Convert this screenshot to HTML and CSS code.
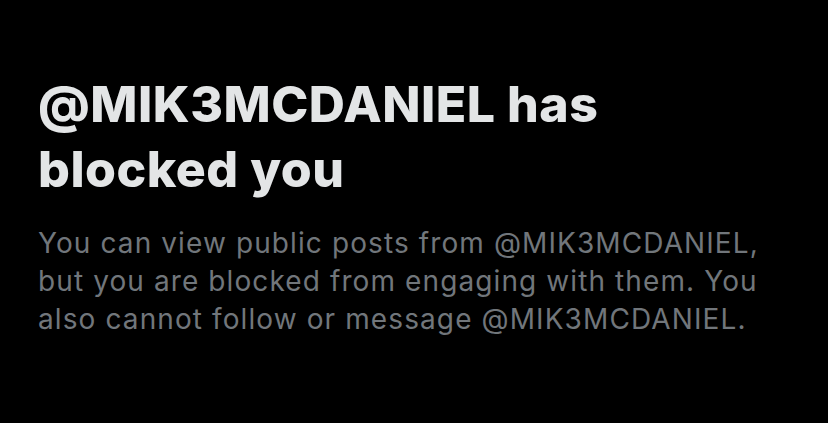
FILE: index.html
```html
<!DOCTYPE html>
<html lang="en">
<head>
    <meta charset="UTF-8">
    <meta name="viewport" content="width=device-width, initial-scale=1.0">
    <title>Blocked</title>
    <link rel="stylesheet" href="styles.css">
</head>
<body>

<div class="container">
    <h2 class="title">@MIK3MCDANIEL has blocked you</h2>
    <p class="message">You can view public posts from @MIK3MCDANIEL, but you are blocked from engaging with them. You also cannot follow or message @MIK3MCDANIEL.</p>
</div>

</body>
</html>
```

FILE: styles.css
```css
body {
    margin: 0;
    background-color: #000;
    font-family: Inter, "Noto Sans", sans-serif;
}
.container {
    padding: 72px 38px 0 38px;
    max-width: 740px;
}
.title {
    margin: 0;
    font-size: 50px;
    line-height: 65px;
    font-weight: 800;
    letter-spacing: 0.5px;
    color: #e3e5e6;
    max-width: 620px;
}
.message {
    margin: 22px 0 0 0;
    font-size: 28px;
    line-height: 38px;
    letter-spacing: 1.1px;
    color: #71767b;
}
```
